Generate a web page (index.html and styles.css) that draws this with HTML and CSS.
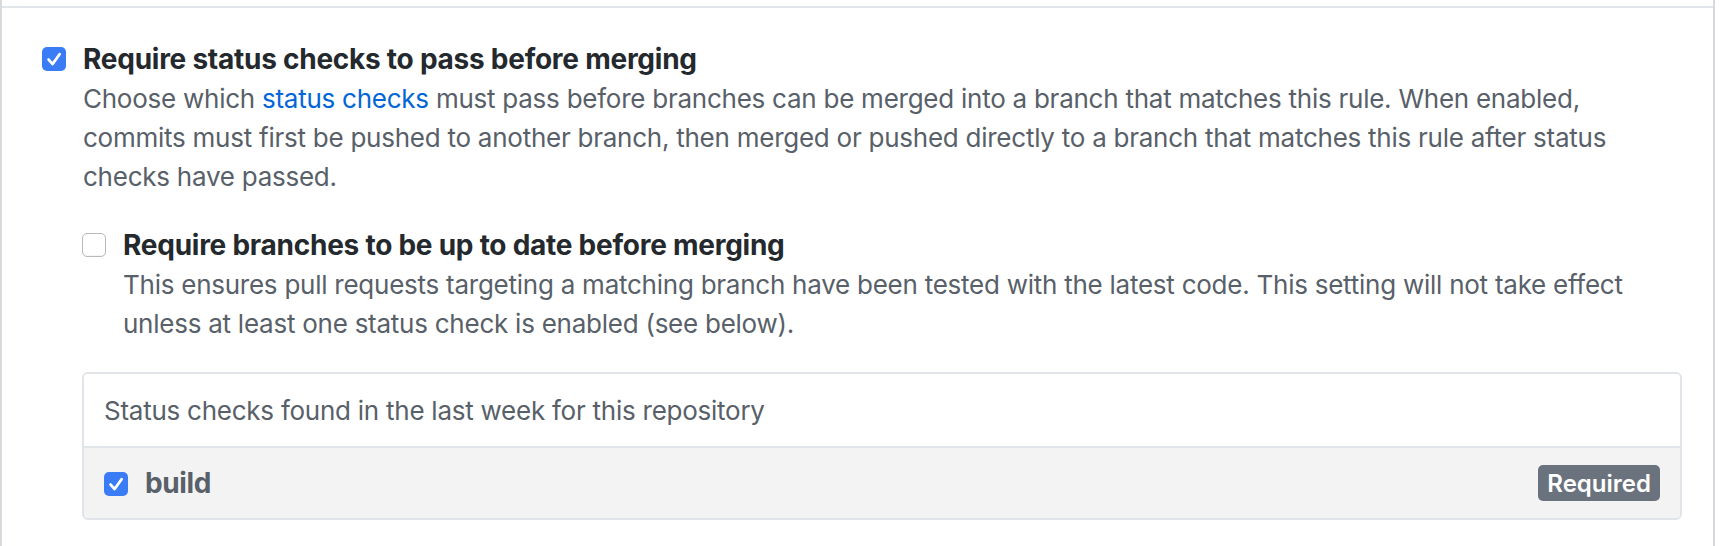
FILE: index.html
```html
<!DOCTYPE html>
<html lang="en">
<head>
<meta charset="utf-8">
<title>Branch protection</title>
<link rel="stylesheet" href="styles.css">
</head>
<body>
<div class="panel">
  <div class="panel-top"></div>
  <div class="panel-row">
    <div class="check-item">
      <span class="cb cb-on"><svg viewBox="0 0 24 24" width="24" height="24"><path d="M6.6 12.6 L10.6 17 L17.6 7.2" fill="none" stroke="#fff" stroke-width="2.8" stroke-linecap="round" stroke-linejoin="round"/></svg></span>
      <div class="check-body">
        <div class="check-title">Require status checks to pass before merging</div>
        <p class="note">Choose which <a href="#" class="link">status checks</a> must pass before branches can be merged into a branch that matches this rule. When enabled, commits must first be pushed to another branch, then merged or pushed directly to a branch that matches this rule after status checks have passed.</p>

        <div class="check-item nested">
          <span class="cb cb-off"></span>
          <div class="check-body">
            <div class="check-title">Require branches to be up to date before merging</div>
            <p class="note">This ensures pull requests targeting a matching branch have been tested with the latest code. This setting will not take effect unless at least one status check is enabled (see below).</p>
          </div>
        </div>

        <div class="checks-box">
          <div class="checks-header">Status checks found in the last week for this repository</div>
          <div class="checks-row">
            <span class="cb cb-on"><svg viewBox="0 0 24 24" width="24" height="24"><path d="M6.6 12.6 L10.6 17 L17.6 7.2" fill="none" stroke="#fff" stroke-width="2.8" stroke-linecap="round" stroke-linejoin="round"/></svg></span>
            <span class="check-name">build</span>
            <span class="badge">Required</span>
          </div>
        </div>
      </div>
    </div>
  </div>
</div>
</body>
</html>
```

FILE: styles.css
```css
html, body {
  margin: 0;
  padding: 0;
  background: #ffffff;
}

body {
  font-family: Inter, "Noto Sans", "Liberation Sans", sans-serif;
  color: #24292e;
  -webkit-font-smoothing: antialiased;
}

.panel {
  width: 1715px;
  height: 546px;
  box-sizing: border-box;
  border-left: 2px solid #d6d9dd;
  border-right: 2px solid #d6d9dd;
  overflow: hidden;
}

.panel-top {
  height: 6px;
}

.panel-row {
  border-top: 2px solid #e1e4e8;
  padding: 31px 31px 0 40px;
}

.check-item {
  display: grid;
  grid-template-columns: 24px 1fr;
  column-gap: 17px;
  align-items: start;
}

.check-item.nested {
  margin-top: 29px;
  margin-left: -1px;
}

.cb {
  display: block;
  width: 24px;
  height: 24px;
  box-sizing: border-box;
  border-radius: 5px;
  margin-top: 8px;
}

.cb svg {
  display: block;
}

.cb-on {
  background: #3a7bf6;
}

.cb-off {
  background: #ffffff;
  border: 1.5px solid #b9b9b9;
  box-shadow: inset 0 -1px 0 rgba(0, 0, 0, 0.04);
}

.check-title {
  font-size: 28px;
  font-weight: 700;
  line-height: 40px;
  letter-spacing: -0.25px;
  color: #24292e;
}

.note {
  margin: 0;
  font-size: 26px;
  line-height: 39px;
  letter-spacing: -0.25px;
  color: #586069;
}

.link {
  color: #0366d6;
  text-decoration: none;
}

.checks-box {
  margin-top: 29px;
  margin-left: -1px;
  border: 2px solid #e1e4e8;
  border-radius: 6px;
  overflow: hidden;
}

.checks-header {
  padding: 17px 20px 16px 20px;
  font-size: 26px;
  line-height: 39px;
  letter-spacing: -0.25px;
  color: #586069;
  background: #ffffff;
}

.checks-row {
  border-top: 2px solid #e1e4e8;
  background: #f3f3f3;
  height: 72px;
  box-sizing: border-box;
  padding: 0 20px;
  display: flex;
  align-items: center;
  gap: 17px;
}

.checks-row .cb {
  margin-top: 2px;
}

.check-name {
  font-size: 28px;
  font-weight: 700;
  letter-spacing: -0.4px;
  color: #586069;
  flex: 1;
}

.badge {
  display: inline-flex;
  align-items: center;
  height: 36px;
  padding: 0 9px;
  border-radius: 5px;
  background: #6a737d;
  color: #ffffff;
  font-size: 24px;
  font-weight: 600;
}
```
